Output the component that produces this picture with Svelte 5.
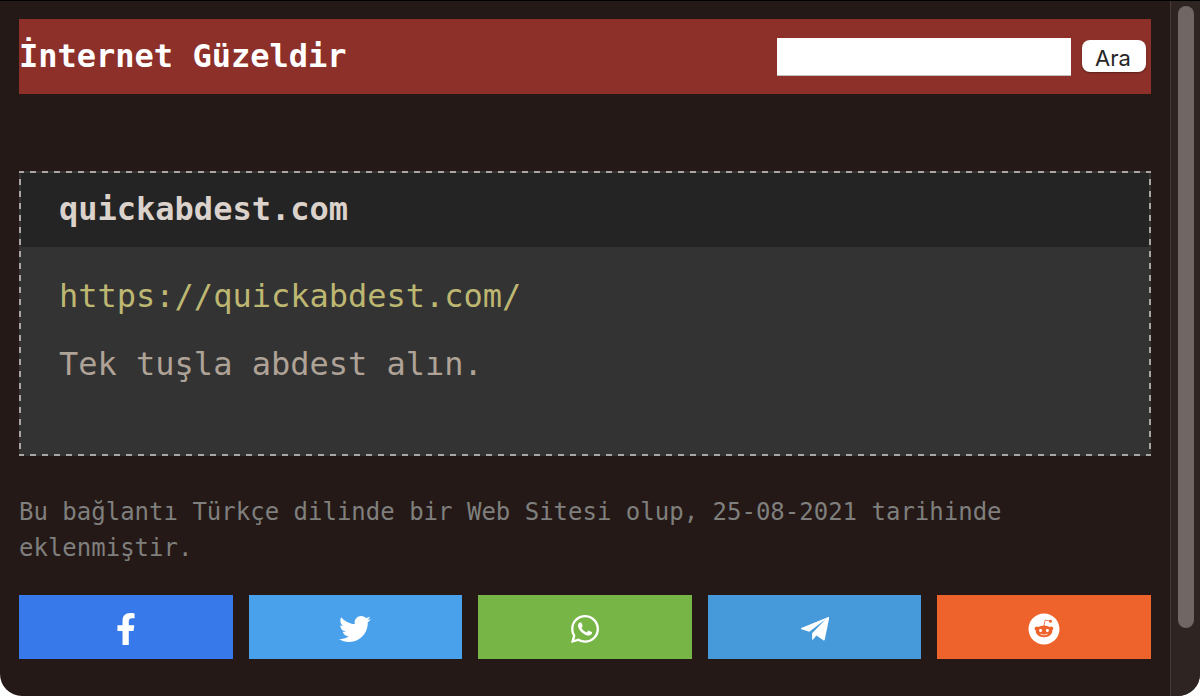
<script>
  const shares = [
    {
      name: 'Facebook', color: '#3779ea', box: '0 0 320 512', width: 20,
      path: 'M279.14 288l14.22-92.66h-88.91v-60.13c0-25.35 12.42-50.06 52.24-50.06h40.42V6.26S260.43 0 225.36 0c-73.22 0-121.08 44.38-121.08 124.72v70.62H22.89V288h81.39v224h100.17V288z'
    },
    {
      name: 'Twitter', color: '#49a1eb', box: '0 0 512 512', width: 32,
      path: 'M459.37 151.716c.325 4.548.325 9.097.325 13.645 0 138.72-105.583 298.558-298.558 298.558-59.452 0-114.68-17.219-161.137-47.106 8.447.974 16.568 1.299 25.34 1.299 49.055 0 94.213-16.568 130.274-44.832-46.132-.975-84.792-31.188-98.112-72.772 6.498.974 12.995 1.624 19.818 1.624 9.421 0 18.843-1.3 27.614-3.573-48.081-9.747-84.143-51.98-84.143-102.985v-1.299c13.969 7.797 30.214 12.67 47.431 13.319-28.264-18.843-46.781-51.005-46.781-87.391 0-19.492 5.197-37.36 14.294-52.954 51.655 63.675 129.3 105.258 216.365 109.807-1.624-7.797-2.599-15.918-2.599-24.04 0-57.828 46.782-104.934 104.934-104.934 30.213 0 57.502 12.67 76.67 33.137 23.715-4.548 46.456-13.32 66.599-25.34-7.798 24.366-24.366 44.833-46.132 57.827 21.117-2.273 41.584-8.122 60.426-16.243-14.292 20.791-32.161 39.308-52.628 54.253z'
    },
    {
      name: 'WhatsApp', color: '#77b546', box: '0 0 448 512', width: 28,
      path: 'M380.9 97.1C339 55.1 283.2 32 223.9 32c-122.4 0-222 99.6-222 222 0 39.1 10.2 77.3 29.6 111L0 480l117.7-30.9c32.4 17.7 68.9 27 106.1 27h.1c122.3 0 224.1-99.6 224.1-222 0-59.3-25.2-115-67.1-157zm-157 341.6c-33.2 0-65.7-8.9-94-25.7l-6.7-4-69.8 18.3L72 359.2l-4.4-7c-18.5-29.4-28.2-63.3-28.2-98.2 0-101.7 82.8-184.5 184.6-184.5 49.3 0 95.6 19.2 130.4 54.1 34.8 34.9 56.2 81.2 56.1 130.5 0 101.8-84.9 184.6-186.6 184.6zm101.2-138.2c-5.5-2.8-32.8-16.2-37.9-18-5.1-1.9-8.8-2.8-12.5 2.8-3.7 5.6-14.3 18-17.6 21.8-3.2 3.7-6.5 4.2-12 1.4-32.6-16.3-54-29.1-75.5-66-5.7-9.8 5.7-9.1 16.3-30.3 1.8-3.7.9-6.9-.5-9.7-1.4-2.8-12.5-30.1-17.1-41.2-4.5-10.8-9.1-9.3-12.5-9.5-3.2-.2-6.9-.2-10.6-.2-3.7 0-9.7 1.4-14.8 6.9-5.1 5.6-19.4 19-19.4 46.3 0 27.3 19.9 53.7 22.6 57.4 2.8 3.7 39.1 59.7 94.8 83.8 35.2 15.2 49 16.5 66.6 13.9 10.7-1.6 32.8-13.4 37.4-26.4 4.6-13 4.6-24.1 3.2-26.4-1.3-2.5-5-3.9-10.5-6.6z'
    },
    {
      name: 'Telegram', color: '#469ada', box: '0 0 28 32', width: 28,
      path: 'M.3 15.1 27.3 4.1Q28.4 3.7 28.2 5L23.7 26.8Q23.4 28 22.3 27.3L15.4 22.5 12.1 26.4Q11.1 27.2 11.1 25.9V20.3L24.6 6.3 8.3 18.7.4 16.2Q-.5 15.7.3 15.1Z'
    },
    {
      name: 'Reddit', color: '#ee622b', box: '0 0 512 512', width: 32,
      path: 'M201.5 305.5c-13.8 0-24.9-11.1-24.9-24.6 0-13.8 11.1-24.9 24.9-24.9 13.6 0 24.6 11.1 24.6 24.9 0 13.6-11.1 24.6-24.6 24.6zM504 256c0 137-111 248-248 248S8 393 8 256 119 8 256 8s248 111 248 248zm-132.3-41.2c-9.4 0-17.7 3.9-23.8 10-22.4-15.5-52.6-25.5-86.1-26.6l17.4-78.3 55.4 12.5c0 13.6 11.1 24.6 24.6 24.6 13.8 0 24.9-11.3 24.9-24.9s-11.1-24.9-24.9-24.9c-9.7 0-18 5.8-22.1 13.8l-61.2-13.6c-3-.8-6.1 1.4-6.9 4.4l-19.1 86.4c-33.2 1.4-63.1 11.3-85.5 26.8-6.1-6.4-14.7-10.2-24.1-10.2-34.9 0-46.3 46.9-14.4 62.8-1.1 5-1.7 10.2-1.7 15.5 0 52.6 59.2 95.2 132 95.2 73.1 0 132.3-42.6 132.3-95.2 0-5.3-.6-10.8-1.9-15.8 31.3-16 19.8-62.5-14.9-62.5zM302.8 331c-18.2 18.2-76.1 17.9-93.6 0-2.2-2.2-6.1-2.2-8.3 0-2.5 2.5-2.5 6.4 0 8.6 22.8 22.8 87.3 22.8 110.2 0 2.5-2.2 2.5-6.1 0-8.6-2.2-2.2-6.1-2.2-8.3 0zm7.7-75c-13.6 0-24.6 11.1-24.6 24.9 0 13.6 11.1 24.6 24.6 24.6 13.8 0 24.9-11.1 24.9-24.6 0-13.8-11-24.9-24.9-24.9z'
    }
  ];
  let query = $state('');
</script>

<div class="window">
  <main>
    <header>
      <h1>İnternet Güzeldir</h1>
      <form role="search" onsubmit={(e) => e.preventDefault()}>
        <input type="text" aria-label="Ara" bind:value={query} />
        <button type="submit">Ara</button>
      </form>
    </header>

    <article>
      <h2>quickabdest.com</h2>
      <div class="body">
        <p><a href="https://quickabdest.com/">https://quickabdest.com/</a></p>
        <p>Tek tuşla abdest alın.</p>
      </div>
    </article>

    <p class="meta">Bu bağlantı Türkçe dilinde bir Web Sitesi olup, 25-08-2021 tarihinde eklenmiştir.</p>

    <nav>
      {#each shares as s}
        <a href="#{s.name.toLowerCase()}" aria-label={s.name} style="background: {s.color}">
          <svg viewBox={s.box} width={s.width} height="32" aria-hidden="true"><path d={s.path} /></svg>
        </a>
      {/each}
    </nav>
  </main>
  <div class="track" aria-hidden="true"><div class="thumb"></div></div>
</div>

<style>
  :global(body) {
    margin: 0;
    background: #fff;
  }
  .window {
    display: flex;
    box-sizing: border-box;
    min-height: 100vh;
    border-top: 1px solid #000;
    border-radius: 0 0 22px 22px;
    overflow: hidden;
    background: #241917;
    font-family: "DejaVu Sans Mono", Menlo, monospace;
  }
  main {
    flex: 1;
    min-width: 0;
    padding: 18px 19px 36px;
  }
  h1, h2, p {
    margin: 0;
  }
  h1, h2 {
    padding-bottom: 2px;
    font-size: 32px;
    line-height: 72px;
    font-weight: 700;
  }
  header {
    display: flex;
    align-items: center;
    justify-content: space-between;
    background: #8d302a;
    color: #fff;
    height: 75px;
    padding-right: 5px;
  }
  form {
    display: flex;
    align-items: center;
    gap: 11px;
  }
  input {
    box-sizing: border-box;
    width: 294px;
    height: 38px;
    border: 0;
    border-bottom: 1px solid #c8c0be;
    padding: 0 6px;
    background: #fff;
    font: 22px Inter, sans-serif;
  }
  button {
    height: 32px;
    width: 64px;
    margin-bottom: 2px;
    padding: 4px 2px 0 0;
    border: 0;
    border-radius: 8px;
    background: #fff;
    color: #262626;
    box-shadow: 0 1px 2px rgba(0, 0, 0, 0.35);
    font: 22px/28px Inter, sans-serif;
  }
  article {
    --h: repeating-linear-gradient(90deg, #aaa6a4 0 6px, transparent 6px 12px);
    --v: repeating-linear-gradient(180deg, #aaa6a4 0 6px, transparent 6px 12px);
    margin-top: 77px;
    padding: 2px;
    background:
      var(--h) -1px 0 / 1200px 2px repeat-x,
      var(--h) -1px 100% / 1200px 2px repeat-x,
      var(--v) 0 -4px / 2px 1200px repeat-y,
      var(--v) 100% -4px / 2px 1200px repeat-y,
      #333;
  }
  h2 {
    padding-left: 38px;
    padding-right: 38px;
    background: #242424;
    color: #dbd2cc;
  }
  .body {
    padding: 24px 38px 65px;
    font-size: 32px;
    line-height: 50px;
    color: #afa296;
  }
  .body p + p {
    margin-top: 18px;
  }
  .body a {
    color: #bdb772;
    text-decoration: none;
  }
  .meta {
    margin-top: 38px;
    font-size: 24px;
    line-height: 36px;
    color: #7f7f7d;
  }
  nav {
    display: grid;
    grid-template-columns: repeat(5, 1fr);
    gap: 16px;
    margin-top: 29px;
  }
  nav a {
    display: flex;
    align-items: center;
    justify-content: center;
    height: 64px;
    padding-top: 4px;
    box-sizing: border-box;
  }
  svg {
    fill: #fff;
  }
  .track {
    box-sizing: border-box;
    width: 30px;
    padding: 5px 5px 68px 7px;
    border-left: 1px solid #443a38;
    background: #2e2523;
    display: flex;
  }
  .thumb {
    width: 16px;
    border-radius: 8px;
    background: #706664;
  }
</style>
